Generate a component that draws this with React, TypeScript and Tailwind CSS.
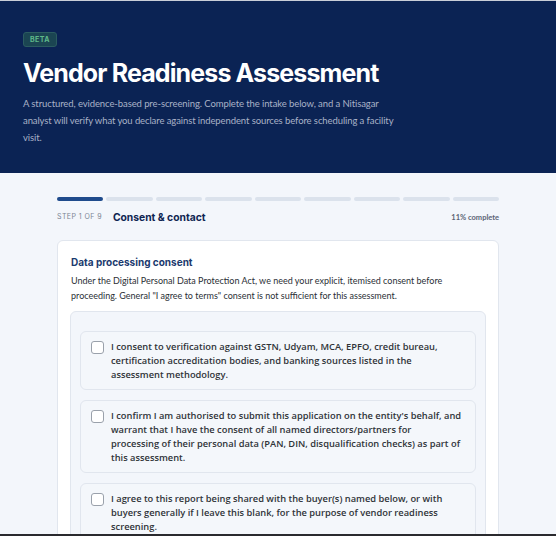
import { useState, type ReactNode } from "react";

const consents: ReactNode[] = [
  <>
    I consent to verification against GSTN, Udyam, MCA, EPFO, credit bureau, certification accreditation bodies, and
    banking sources listed in the <span className="whitespace-nowrap">assessment methodology.</span>
  </>,
  <>
    I confirm I am authorised to submit this application on the entity's behalf, and warrant that I have the consent of
    all named directors/partners for <span className="whitespace-nowrap">processing of their personal data</span> (PAN,
    DIN, disqualification checks) as part of this assessment.
  </>,
  <>
    I agree to this report being shared with the buyer(s) named below, or with buyers generally if I leave this blank,
    for the purpose of vendor readiness screening.
  </>,
];

export default function App() {
  const [checked, setChecked] = useState<boolean[]>([false, false, false]);

  const toggle = (i: number) => {
    setChecked(checked.map((c, j) => (j === i ? !c : c)));
  };

  return (
    <div className="min-h-screen bg-[#f3f6fb] border-t border-[#c9ced8]" style={{ fontFamily: "Lato, sans-serif" }}>
      {/* Hero */}
      <header className="bg-[#0b2354] px-[23px] pt-[31px] pb-[27px]">
        <div className="flex">
          <span className="flex items-center h-[15px] px-[6px] rounded-[3px] bg-[#1b4552] border border-[#2b5b60] text-[7px] leading-none font-bold tracking-[0.06em] text-[#5fb98a] font-['Inter',sans-serif]">
            BETA
          </span>
        </div>
        <h1 className="mt-[9px] text-[25px] leading-[34px] font-bold tracking-[-0.035em] text-white font-['Inter',sans-serif]">
          Vendor Readiness Assessment
        </h1>
        <p className="mt-[5px] max-w-[374px] text-[9.5px] leading-[17px] tracking-[-0.01em] text-[#a9b2c7]">
          A structured, evidence-based pre-screening. Complete the intake below, and a Nitisagar analyst will verify what you declare against independent sources before scheduling a facility visit.
        </p>
      </header>

      <main className="w-[442px] mx-auto pt-[24px]">
        {/* Progress */}
        <div className="flex gap-[3px]">
          {Array.from({ length: 9 }).map((_, i) => (
            <div key={i} className={i === 0 ? "flex-1 h-[4px] rounded-full bg-[#1f4b8c]" : "flex-1 h-[4px] rounded-full bg-[#dbe2ec]"} />
          ))}
        </div>

        <div className="mt-[9px] flex items-center justify-between">
          <div className="flex items-center gap-[11px]">
            <span className="text-[7px] tracking-[0.06em] text-[#7b8494] font-['Inter',sans-serif]">STEP 1 OF 9</span>
            <span className="text-[10.3px] font-bold text-[#0f2552] font-['Inter',sans-serif]">Consent &amp; contact</span>
          </div>
          <span className="text-[7.5px] text-[#5b6475] font-bold">11% complete</span>
        </div>

        {/* Card */}
        <section className="mt-[15px] bg-white border border-[#e1e6ee] rounded-[6px] px-[12px] pt-[14px] pb-[16px]">
          <h2 className="pl-[1px] text-[10px] leading-[14px] font-bold text-[#1b3a6e] font-['Inter',sans-serif]">
            Data processing consent
          </h2>
          <p className="pl-[1px] mt-[4px] text-[9px] leading-[15px] text-[#2b2f36]">
            Under the Digital Personal Data Protection Act, we need your explicit, itemised consent before proceeding. General "I agree to terms" consent is not sufficient for this assessment.
          </p>

          <div className="mt-[8px] bg-[#f3f6fb] border border-[#e1e6ee] rounded-[6px] px-[9px] pt-[19px] pb-[12px] flex flex-col gap-[10px]">
            {consents.map((text, i) => (
              <label
                key={i}
                className="flex items-start gap-[7px] bg-[#f4f7fb] border border-[#e1e6ee] rounded-[6px] pl-[10px] pr-[6px] pt-[8px] pb-[7px] cursor-pointer"
              >
                <input
                  type="checkbox"
                  checked={checked[i]}
                  onChange={() => toggle(i)}
                  className="appearance-none mt-[1px] shrink-0 w-[13px] h-[13px] rounded-[3px] border border-[#9aa1ab] bg-white checked:bg-[#1f4b8c]"
                />
                <span className="text-[9.3px] leading-[14px] font-semibold text-[#2f3338] font-['Open_Sans',sans-serif]">
                  {text}
                </span>
              </label>
            ))}
          </div>
        </section>
      </main>

      <div className="fixed left-0 right-0 bottom-0 h-[2px] bg-[#2a2a2e]" />
    </div>
  );
}
